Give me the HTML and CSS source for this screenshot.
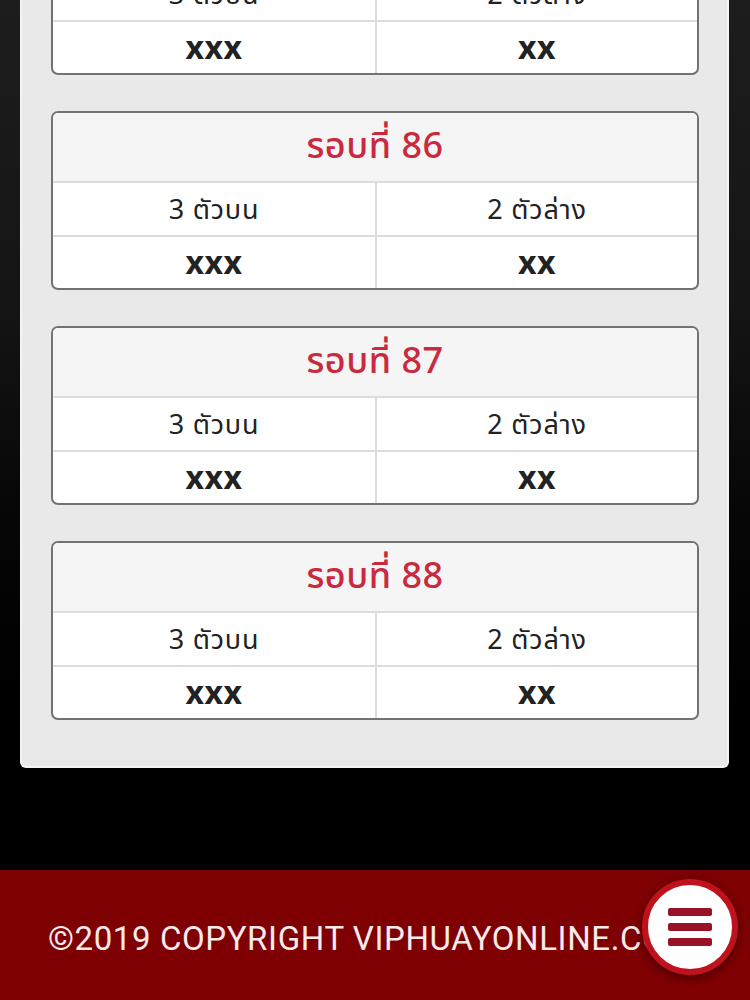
FILE: index.html
```html
<!DOCTYPE html>
<html lang="th">
<head>
<meta charset="utf-8">
<title>VIPHUAYONLINE</title>
<link rel="stylesheet" href="styles.css">
</head>
<body>
<div class="page">
  <main class="panel">
    <section class="round">
      <div class="round-head">รอบที่ 85</div>
      <div class="round-row"><div class="cell label">3 ตัวบน</div><div class="cell label">2 ตัวล่าง</div></div>
      <div class="round-row"><div class="cell value">xxx</div><div class="cell value">xx</div></div>
    </section>
    <section class="round">
      <div class="round-head">รอบที่ 86</div>
      <div class="round-row"><div class="cell label">3 ตัวบน</div><div class="cell label">2 ตัวล่าง</div></div>
      <div class="round-row"><div class="cell value">xxx</div><div class="cell value">xx</div></div>
    </section>
    <section class="round">
      <div class="round-head">รอบที่ 87</div>
      <div class="round-row"><div class="cell label">3 ตัวบน</div><div class="cell label">2 ตัวล่าง</div></div>
      <div class="round-row"><div class="cell value">xxx</div><div class="cell value">xx</div></div>
    </section>
    <section class="round">
      <div class="round-head">รอบที่ 88</div>
      <div class="round-row"><div class="cell label">3 ตัวบน</div><div class="cell label">2 ตัวล่าง</div></div>
      <div class="round-row"><div class="cell value">xxx</div><div class="cell value">xx</div></div>
    </section>
  </main>
  <footer class="footer">
    <p class="copyright">©2019 COPYRIGHT VIPHUAYONLINE.COM</p>
    <button class="menu-btn" aria-label="menu">
      <span class="bar"></span><span class="bar"></span><span class="bar"></span>
    </button>
  </footer>
</div>
</body>
</html>
```

FILE: styles.css
```css
* { box-sizing: border-box; }
html, body { margin: 0; padding: 0; }
body {
  width: 750px;
  height: 1000px;
  overflow: hidden;
  background: #000;
  font-family: "Noto Sans Thai", "Noto Sans", "Open Sans", sans-serif;
}
.page {
  height: 1000px;
  display: flex;
  flex-direction: column;
  background: linear-gradient(180deg, #1d1d1d 0px, #151515 300px, #060606 520px, #000 700px);
}
.panel {
  margin: -140px 21px 0 20px;
  padding: 36px 28px 46px 29px;
  background: #e9e9e9;
  border: 2px solid #f4f4f4;
  border-top: none;
  border-radius: 0 0 6px 6px;
  display: flex;
  flex-direction: column;
  gap: 36px;
}
.round {
  border: 2px solid #727272;
  border-radius: 7px;
  background: #fff;
  overflow: hidden;
}
.round-head {
  height: 70px;
  background: #f5f5f6;
  display: flex;
  align-items: center;
  justify-content: center;
  color: #c92a3e;
  font-size: 36px;
  font-weight: 500;
  letter-spacing: 0.5px;
  border-bottom: 2px solid #dcdcdc;
}
.round-row {
  display: grid;
  grid-template-columns: 1fr 1fr;
  height: 52px;
}
.round-row + .round-row { border-top: 2px solid #dcdcdc; height: 53px; }
.cell {
  display: flex;
  align-items: center;
  justify-content: center;
  color: #222;
}
.cell + .cell { border-left: 2px solid #dcdcdc; }
.label { font-size: 27px; letter-spacing: 0.8px; padding-top: 2px; }
.value { font-size: 32px; font-weight: 700; padding-top: 2px; letter-spacing: 0.5px; }

.footer {
  margin-top: auto;
  height: 130px;
  background: #7e0003;
  position: relative;
  display: flex;
  align-items: center;
  overflow: hidden;
}
.copyright {
  margin: 6px 0 0 48px;
  white-space: nowrap;
  color: #f6eaea;
  font-family: Roboto, "Liberation Sans", sans-serif;
  font-size: 33px;
  letter-spacing: 0.6px;
}
.menu-btn {
  position: absolute;
  left: 642px;
  top: 9px;
  width: 96px;
  height: 96px;
  border-radius: 50%;
  border: 6px solid #c0121c;
  background: #fff;
  box-shadow: 0 3px 10px rgba(0,0,0,0.45);
  padding: 0;
  display: flex;
  flex-direction: column;
  align-items: center;
  justify-content: center;
  gap: 7px;
}
.bar {
  display: block;
  width: 44px;
  height: 8px;
  border-radius: 2px;
  background: #9a1228;
}
```
